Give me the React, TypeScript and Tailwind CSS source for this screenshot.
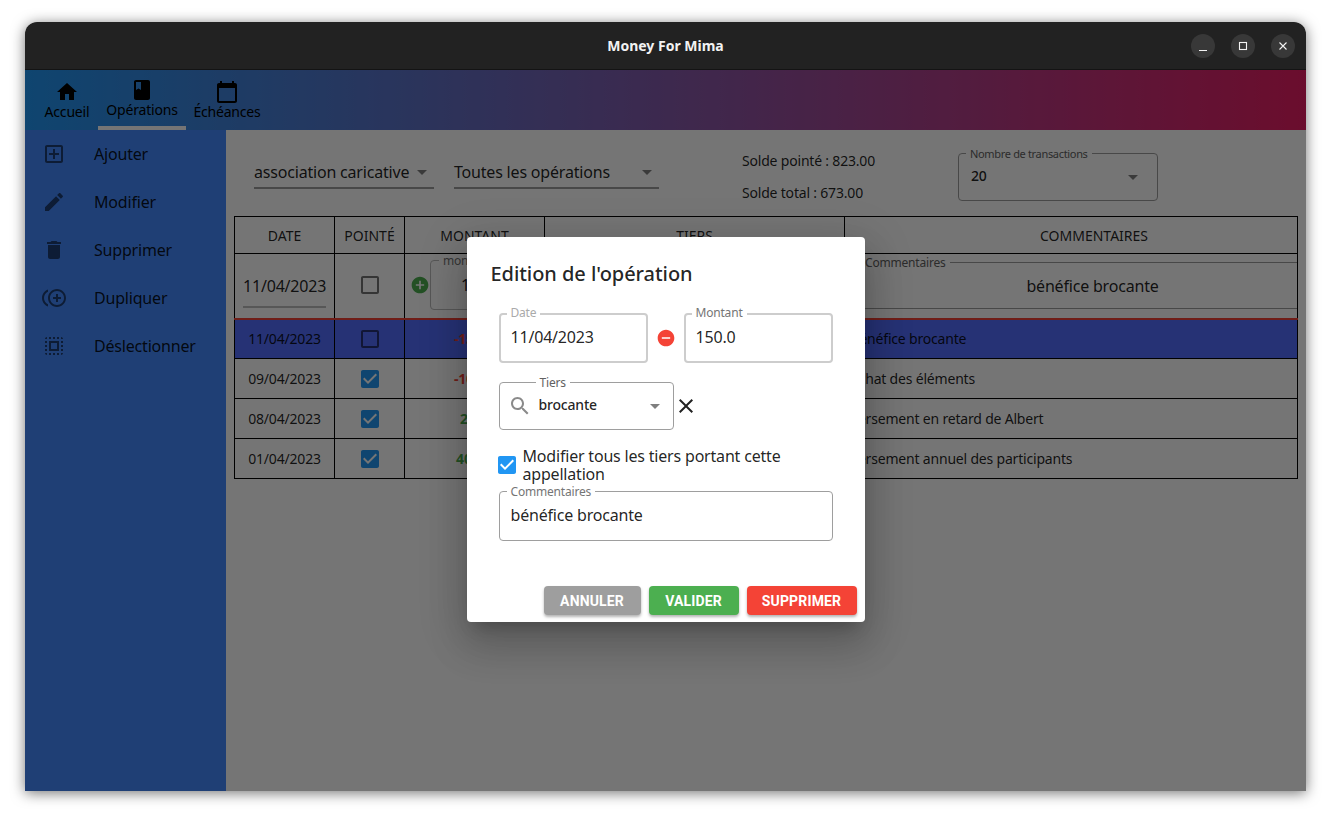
const ICONS = {
  home: "M10 20v-6h4v6h5v-8h3L12 3 2 12h3v8z",
  book: "M18 2H6c-1.1 0-2 .9-2 2v16c0 1.1.9 2 2 2h12c1.1 0 2-.9 2-2V4c0-1.1-.9-2-2-2zM6 4h5v8l-2.5-1.5L6 12V4z",
  calendar: "M20 3h-1V1h-2v2H7V1H5v2H4c-1.1 0-2 .9-2 2v16c0 1.1.9 2 2 2h16c1.1 0 2-.9 2-2V5c0-1.1-.9-2-2-2zm0 18H4V8h16v13z",
  addBox: "M19 3H5c-1.1 0-2 .9-2 2v14c0 1.1.9 2 2 2h14c1.1 0 2-.9 2-2V5c0-1.1-.9-2-2-2zm0 16H5V5h14v14zM13 7h-2v4H7v2h4v4h2v-4h4v-2h-4z",
  edit: "M3 17.25V21h3.75L17.81 9.94l-3.75-3.75L3 17.25zM20.71 7.04c.39-.39.39-1.02 0-1.41l-2.34-2.34c-.39-.39-1.02-.39-1.41 0l-1.83 1.83 3.75 3.75 1.83-1.83z",
  trash: "M6 19c0 1.1.9 2 2 2h8c1.1 0 2-.9 2-2V7H6v12zM19 4h-3.5l-1-1h-5l-1 1H5v2h14V4z",
  duplicate: "M16 8h-2v3h-3v2h3v3h2v-3h3v-2h-3zM2 12c0-2.79 1.64-5.2 4.01-6.32V3.52C2.52 4.76 0 8.09 0 12s2.52 7.24 6.01 8.48v-2.16C3.64 17.2 2 14.79 2 12zm13-9c-4.96 0-9 4.04-9 9s4.04 9 9 9 9-4.04 9-9-4.04-9-9-9zm0 16c-3.86 0-7-3.14-7-7s3.14-7 7-7 7 3.14 7 7-3.14 7-7 7z",
  selectAll: "M3 5h2V3c-1.1 0-2 .9-2 2zm0 8h2v-2H3v2zm4 8h2v-2H7v2zM3 9h2V7H3v2zm10-6h-2v2h2V3zm6 0v2h2c0-1.1-.9-2-2-2zM5 21v-2H3c0 1.1.9 2 2 2zm-2-4h2v-2H3v2zM9 3H7v2h2V3zm2 18h2v-2h-2v2zm8-8h2v-2h-2v2zm0 8c1.1 0 2-.9 2-2h-2v2zm0-12h2V7h-2v2zm0 8h2v-2h-2v2zm-4 4h2v-2h-2v2zm0-16h2V3h-2v2zM7 17h10V7H7v10zm2-8h6v6H9V9z",
  arrow: "M7 10l5 5 5-5z",
  search: "M15.5 14h-.79l-.28-.27C15.41 12.59 16 11.11 16 9.5 16 5.91 13.09 3 9.5 3S3 5.91 3 9.5 5.91 16 9.5 16c1.61 0 3.09-.59 4.23-1.57l.27.28v.79l5 4.99L20.49 19l-4.99-5zm-6 0C7.01 14 5 11.99 5 9.5S7.01 5 9.5 5 14 7.01 14 9.5 11.99 14 9.5 14z",
  close: "M19 6.41 17.59 5 12 10.59 6.41 5 5 6.41 10.59 12 5 17.59 6.41 19 12 13.41 17.59 19 19 17.59 13.41 12z",
  plusCircle: "M12 2C6.48 2 2 6.48 2 12s4.48 10 10 10 10-4.48 10-10S17.52 2 12 2zm5 11h-4v4h-2v-4H7v-2h4V7h2v4h4v2z",
  minusCircle: "M12 2C6.48 2 2 6.48 2 12s4.48 10 10 10 10-4.48 10-10S17.52 2 12 2zm5 11H7v-2h10v2z",
  checkBox: "M19 3H5c-1.11 0-2 .9-2 2v14c0 1.1.89 2 2 2h14c1.11 0 2-.9 2-2V5c0-1.1-.89-2-2-2zm-9 14l-5-5 1.41-1.41L10 14.17l7.59-7.59L19 8l-9 9z",
  checkOff: "M19 5v14H5V5h14m0-2H5c-1.1 0-2 .9-2 2v14c0 1.1.9 2 2 2h14c1.1 0 2-.9 2-2V5c0-1.1-.9-2-2-2z",
};

function Icon({ d, className }: { d: string; className?: string }) {
  return (
    <svg viewBox="0 0 24 24" fill="currentColor" className={className}>
      <path d={d} />
    </svg>
  );
}

const navTabs = [
  { label: "Accueil", icon: ICONS.home, width: "w-[62px]", active: false },
  { label: "Opérations", icon: ICONS.book, width: "w-[88px]", active: true },
  { label: "Échéances", icon: ICONS.calendar, width: "w-[82px]", active: false },
];

const sideItems = [
  { label: "Ajouter", icon: ICONS.addBox },
  { label: "Modifier", icon: ICONS.edit },
  { label: "Supprimer", icon: ICONS.trash },
  { label: "Dupliquer", icon: ICONS.duplicate },
  { label: "Déslectionner", icon: ICONS.selectAll },
];

const rows = [
  { date: "11/04/2023", checked: false, amount: "-150.00", tiers: "brocante", comment: "bénéfice brocante", selected: true },
  { date: "09/04/2023", checked: true, amount: "-100.00", tiers: "fournisseur", comment: "achat des éléments", selected: false },
  { date: "08/04/2023", checked: true, amount: "25.00", tiers: "Albert", comment: "versement en retard de Albert", selected: false },
  { date: "01/04/2023", checked: true, amount: "400.00", tiers: "participants", comment: "versement annuel des participants", selected: false },
];

function Outlined({
  label,
  labelClass,
  className,
  children,
}: {
  label: string;
  labelClass?: string;
  className?: string;
  children: React.ReactNode;
}) {
  return (
    <div className={`relative flex items-center rounded ${className ?? ""}`}>
      <span className={`absolute bg-white px-1 leading-[14px] ${labelClass ?? "text-[12px]"}`}>{label}</span>
      {children}
    </div>
  );
}

function WindowButton({ children }: { children: React.ReactNode }) {
  return (
    <div className="flex h-6 w-6 items-center justify-center rounded-full bg-[#383838]">
      <svg viewBox="0 0 12 12" className="h-3 w-3" fill="none" stroke="#f2f2f2" strokeWidth="1.1">
        {children}
      </svg>
    </div>
  );
}

function Dropdown({ text, width }: { text: string; width: string }) {
  return (
    <div className={`flex h-[36px] items-center justify-between border-b-2 border-[#9e9e9e] pt-1 text-[16px] text-black/[0.87] ${width}`}>
      <span className="whitespace-nowrap">{text}</span>
      <Icon d={ICONS.arrow} className="h-6 w-6 text-black/50" />
    </div>
  );
}

export default function App() {
  return (
    <div className="h-screen w-screen overflow-hidden bg-white pl-[25px] pt-[22px] font-['Noto_Sans',sans-serif] tracking-[-0.012em]">
      <div className="flex h-[769px] w-[1281px] flex-col overflow-hidden rounded-t-[12px] shadow-[0_2px_14px_rgba(0,0,0,0.55)]">
        {/* title bar */}
        <div className="relative flex h-[48px] shrink-0 items-center justify-end gap-4 border-b border-[#141414] bg-[#222222] pr-[11px]">
          <span className="absolute inset-x-0 text-center text-[14px] font-bold tracking-normal text-[#f2f2f2]">Money For Mima</span>
          <WindowButton>
            <path d="M2 10.5h8" />
          </WindowButton>
          <WindowButton>
            <rect x="2.5" y="2.5" width="7" height="7" />
          </WindowButton>
          <WindowButton>
            <path d="M2.5 2.5l7 7M9.5 2.5l-7 7" />
          </WindowButton>
        </div>

        <div className="relative flex min-h-0 flex-1 flex-col">
          {/* top nav */}
          <div className="flex h-[60px] shrink-0 bg-linear-to-r/srgb from-[#2196f3] to-[#e91e63] pl-[11px] text-black">
            {navTabs.map((tab) => (
              <div
                key={tab.label}
                className={`flex h-[60px] flex-col items-center ${tab.width} ${tab.active ? "border-b-4 border-white pt-[8px]" : "pt-[10px]"}`}
              >
                <Icon d={tab.icon} className="h-6 w-6 shrink-0" />
                <span className="text-[14px] leading-[16px] whitespace-nowrap">{tab.label}</span>
              </div>
            ))}
          </div>

          <div className="flex min-h-0 flex-1">
            {/* side menu */}
            <div className="flex w-[201px] shrink-0 flex-col bg-[#448aff]">
              {sideItems.map((item) => (
                <div key={item.label} className="flex h-12 items-center pl-[17px]">
                  <Icon d={item.icon} className="h-6 w-6 text-black/55" />
                  <span className="ml-[28px] text-[16px] text-black/[0.87]">{item.label}</span>
                </div>
              ))}
            </div>

            <div className="min-w-0 flex-1 bg-white px-2">
              {/* filters */}
              <div className="flex h-[86px] items-start pt-[23px]">
                <div className="ml-5 flex gap-5">
                  <Dropdown text="association caricative" width="w-[180px]" />
                  <Dropdown text="Toutes les opérations" width="w-[205px]" />
                </div>
                <div className="ml-[83px] flex h-[48px] w-[216px] flex-col justify-between text-[14px] leading-4 text-black/[0.87]">
                  <span>Solde pointé : 823.00</span>
                  <span>Solde total : 673.00</span>
                </div>
                <Outlined
                  label="Nombre de transactions"
                  labelClass="-top-[7px] left-[7px] text-[11px] tracking-[-0.03em] text-[#616161]"
                  className="h-[48px] w-[200px] justify-between border border-[#9e9e9e] pb-[3px] pl-3 pr-[12px]"
                >
                  <span className="text-[14px] font-medium text-black/[0.87]">20</span>
                  <Icon d={ICONS.arrow} className="-mb-[3px] h-6 w-6 text-black/50" />
                </Outlined>
              </div>

              {/* operations table */}
              <table className="w-[1064px] table-fixed border-collapse border border-black text-black/[0.87]">
                <colgroup>
                  <col className="w-[100px]" />
                  <col className="w-[70px]" />
                  <col className="w-[140px]" />
                  <col className="w-[300px]" />
                  <col />
                </colgroup>
                <thead>
                  <tr className="h-[37px] text-center text-[14px] tracking-normal">
                    {["DATE", "POINTÉ", "MONTANT", "TIERS"].map((head) => (
                      <th key={head} className="border border-black font-normal">
                        {head}
                      </th>
                    ))}
                    <th className="border border-black pl-[46px] font-normal">COMMENTAIRES</th>
                  </tr>
                </thead>
                <tbody>
                  <tr className="h-[65px] border-b-2 border-b-[#f44336]">
                    <td className="border-x border-black px-2 pb-[1px] pt-[2px]">
                      <div className="flex h-[44px] items-center border-b-2 border-[#bdbdbd] pt-[1px] text-[16px] whitespace-nowrap">11/04/2023</div>
                    </td>
                    <td className="border-x border-black pb-[1px]">
                      <Icon d={ICONS.checkOff} className="mx-auto h-6 w-6 text-black/55" />
                    </td>
                    <td className="border-x border-black pb-[1px]">
                      <div className="flex items-center pl-[5px] pr-1">
                        <Icon d={ICONS.plusCircle} className="h-5 w-5 shrink-0 text-[#4caf50]" />
                        <Outlined label="montant" labelClass="-top-[7px] left-2 text-[12px] text-[#757575]" className="h-[50px] flex-1 justify-center border border-[#bdbdbd] pr-[8px]">
                          <span className="text-[16px]">150.0</span>
                        </Outlined>
                      </div>
                    </td>
                    <td className="border-x border-black" />
                    <td className="border-x border-black pb-[1px] pl-[7px]">
                      <div className="relative h-[47px] border-y border-[#9e9e9e] pl-[36px] pt-[11px] text-center text-[16px]">
                        <span className="absolute -top-[7px] left-[9px] bg-white px-1 text-[12px] leading-[14px] text-[#616161]">Commentaires</span>
                        bénéfice brocante
                      </div>
                    </td>
                  </tr>
                  {rows.map((row) => (
                    <tr key={row.date} className={`h-[40px] border-b border-black text-[14px] ${row.selected ? "bg-[#536dfe]" : ""}`}>
                      <td className="border-x border-black text-center">{row.date}</td>
                      <td className="border-x border-black">
                        <Icon
                          d={row.checked ? ICONS.checkBox : ICONS.checkOff}
                          className={`mx-auto h-6 w-6 ${row.checked ? "text-[#2196f3]" : "text-black/55"}`}
                        />
                      </td>
                      <td className={`border-x border-black pl-[6px] text-center font-bold ${row.amount.startsWith("-") ? "text-[#f44336]" : "text-[#4caf50]"}`}>
                        {row.amount}
                      </td>
                      <td className="border-x border-black text-center">{row.tiers}</td>
                      <td className="border-x border-black pl-[6px]">{row.comment}</td>
                    </tr>
                  ))}
                </tbody>
              </table>
            </div>
          </div>

          {/* modal barrier + dialog */}
          <div className="absolute inset-0 flex items-center justify-center bg-black/[0.54]">
            <div className="mb-[2px] h-[385px] w-[398px] rounded bg-white shadow-[0_11px_15px_-7px_rgba(0,0,0,0.2),0_24px_38px_3px_rgba(0,0,0,0.14),0_9px_46px_8px_rgba(0,0,0,0.12)]">
              <h2 className="pl-6 pt-[23px] text-[20px] leading-[28px] font-medium tracking-[-0.003em] text-black/[0.87]">Edition de l&apos;opération</h2>

              <div className="mt-[25px] flex items-center pl-[32px]">
                <Outlined label="Date" labelClass="-top-[9px] left-[6px] text-[12px] text-[#aaaaaa]" className="h-[50px] w-[149px] border-2 border-[#cdcdcd] pb-[2px] pl-[10px]">
                  <span className="text-[16px] text-black/[0.87]">11/04/2023</span>
                </Outlined>
                <Icon d={ICONS.minusCircle} className="mx-2 h-5 w-5 text-[#f44336]" />
                <Outlined label="Montant" labelClass="-top-[9px] left-[6px] text-[12px] text-[#757575]" className="h-[50px] w-[149px] border-2 border-[#cdcdcd] pb-[2px] pl-[10px]">
                  <span className="text-[16px] text-black/[0.87]">150.0</span>
                </Outlined>
              </div>

              <div className="mt-[19px] flex items-center pl-[32px]">
                <Outlined label="Tiers" labelClass="-top-[7px] left-9 text-[12px] text-[#616161]" className="h-[48px] w-[175px] border border-[#9e9e9e] pl-2 pr-3">
                  <Icon d={ICONS.search} className="h-6 w-6 text-[#8a8a8a]" />
                  <span className="mb-[3px] ml-[7px] flex-1 text-[14px] font-medium text-black/[0.87]">brocante</span>
                  <Icon d={ICONS.arrow} className="-mr-[6px] h-6 w-6 text-black/50" />
                </Outlined>
                <Icon d={ICONS.close} className="h-6 w-6 text-black/[0.87]" />
              </div>

              <div className="mt-[17px] flex items-center pl-[28px] pr-6">
                <Icon d={ICONS.checkBox} className="h-6 w-6 shrink-0 text-[#2196f3]" />
                <span className="ml-[4px] text-[16px] leading-[18px] text-black/[0.87]">Modifier tous les tiers portant cette appellation</span>
              </div>

              <div className="mt-[8px] pl-[32px]">
                <Outlined label="Commentaires" labelClass="-top-[7px] left-[7px] text-[12px] text-[#757575]" className="h-[50px] w-[334px] border border-[#9e9e9e] pb-[2px] pl-[11px]">
                  <span className="text-[16px] text-black/[0.87]">bénéfice brocante</span>
                </Outlined>
              </div>

              <div className="mt-[45px] flex justify-end gap-2 pr-2 font-['Roboto',sans-serif] text-[14px] font-bold tracking-[0.01em] text-white">
                <button className="h-[29px] w-[97px] rounded bg-[#9e9e9e] pt-[2px] shadow-[0_2px_3px_rgba(0,0,0,0.3)]">ANNULER</button>
                <button className="h-[29px] w-[90px] rounded bg-[#4caf50] pt-[2px] shadow-[0_2px_3px_rgba(0,0,0,0.3)]">VALIDER</button>
                <button className="h-[29px] w-[110px] rounded bg-[#f44336] pt-[2px] shadow-[0_2px_3px_rgba(0,0,0,0.3)]">SUPPRIMER</button>
              </div>
            </div>
          </div>
        </div>
      </div>
    </div>
  );
}
